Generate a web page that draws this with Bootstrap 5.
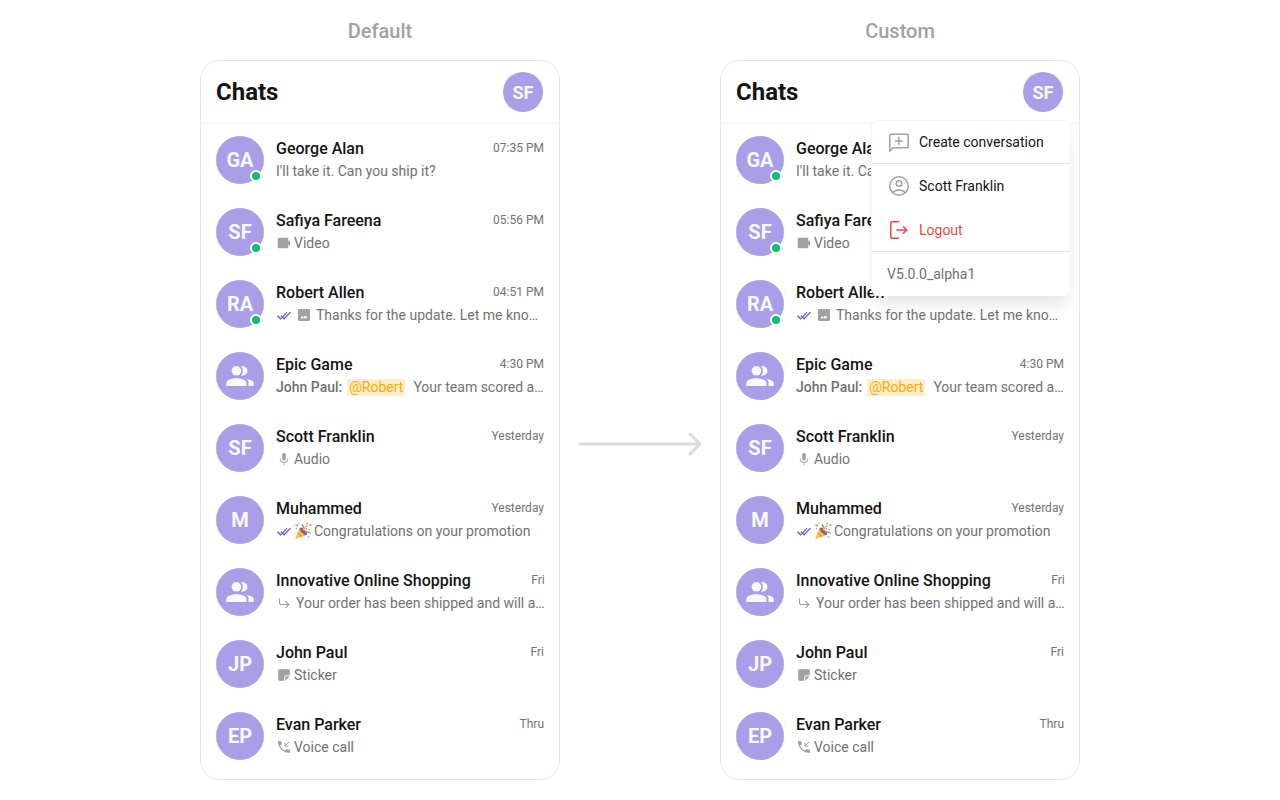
<!DOCTYPE html>
<html lang="en">
<head>
<meta charset="utf-8">
<meta name="viewport" content="width=device-width, initial-scale=1">
<title>Chats</title>
<link href="https://cdn.jsdelivr.net/npm/bootstrap@5.3.0/dist/css/bootstrap.min.css" rel="stylesheet">
<style>
  body { font-family: Roboto, sans-serif; color: #141414; background: #fff; }
  main { padding-top: 19px; }
  .panel { flex: 0 1 360px; min-width: 0; }
  .panel-label { font-size: 20px; line-height: 24px; font-weight: 500; color: #a1a1a1; margin-bottom: 17px; }
  .chat-card { border: 1px solid #e8e8e8; border-radius: 20px; padding-bottom: 7px; }
  .chat-head { height: 63px; padding: 0 16px 0 15px; border-bottom: 1px solid #f5f5f5; }
  .chat-title { font-size: 24px; line-height: 28px; font-weight: 700; }
  .avatar { width: 48px; height: 48px; background: #aa9ee8; color: #f9f8fd; font-size: 20px; font-weight: 700; }
  .avatar-btn { width: 40px; height: 40px; font-size: 18px; }
  .online { width: 12px; height: 12px; right: 2px; bottom: 2px; background: #09c26f; border: 2px solid #fff; }
  .chat-row { gap: 12px; padding: 12px 15px; }
  .chat-name { font-size: 16px; line-height: 26px; font-weight: 500; }
  .chat-time { font-size: 12px; line-height: 24px; color: #727272; }
  .chat-sub { font-size: 14px; line-height: 18px; color: #727272; gap: 2px; }
  .chat-sub.roomy { gap: 4px; }
  .chat-sub svg { width: 16px; height: 16px; flex: none; fill: #a1a1a1; }
  .chat-sub svg.emoji { width: 18px; height: 18px; }
  .sender { font-weight: 500; margin-right: 3px; }
  .mention { color: #ffab00; background: #ffeecc; border-radius: 2px; line-height: 17px; padding: 0 2px; margin-right: 6px; }
  .arrow-col { flex: 0 0 160px; padding-top: 88px; }
  .user-menu { top: 59px; right: 8px; width: 200px; border: 1px solid #f5f5f5; border-bottom: 0; border-radius: 8px; box-shadow: 0 12px 16px -4px rgba(20,20,20,.11); font-size: 14px; background: #fff; z-index: 5; }
  .user-menu li { height: 44px; }
  .user-menu li:first-child { height: 43px; }
  .user-menu li.ruled { box-shadow: inset 0 -1px #e4e4e4; }
  .user-menu button, .version { padding: 0 15px; color: #141414; gap: 8px; font-size: 14px; }
  .user-menu svg { width: 24px; height: 24px; flex: none; }
  .user-menu .logout { color: #f44649; }
  .user-menu .version { color: #727272; }
</style>
</head>
<body>
<svg class="d-none" aria-hidden="true">
  <symbol id="i-video" viewBox="0 0 16 16"><path d="M3 2.700h8a1.300 1.300 0 0 1 1.300 1.300v2.700L14 5v6l-1.700-1.700V12A1.300 1.300 0 0 1 11 13.300H3A1.300 1.300 0 0 1 1.700 12V4A1.300 1.300 0 0 1 3 2.700z"/></symbol>
  <symbol id="i-image" viewBox="0 0 16 16"><path fill-rule="evenodd" d="M3.200 2h9.600A1.200 1.200 0 0 1 14 3.200v9.600a1.200 1.200 0 0 1-1.200 1.200H3.200A1.200 1.200 0 0 1 2 12.800V3.200A1.200 1.200 0 0 1 3.200 2zM4.500 11.300h7L9.300 8.400l-1.800 2.200-1.300-1.500z"/></symbol>
  <symbol id="i-read" viewBox="0 0 16 16"><path d="M1.400 8.700l3.200 3.100 .8-.8M6.500 9.900l4.500-4.500M4.900 8.700L8 11.800l6.600-6.700" fill="none" stroke="#6852d6" stroke-width="1.250"/></symbol>
  <symbol id="i-mic" viewBox="0 0 16 16"><rect x="6.200" y="2" width="3.600" height="7.600" rx="1.800"/><path d="M4 7.600a4 4 0 0 0 8 0M8 11.500V14" fill="none" stroke="#a1a1a1"/></symbol>
  <symbol id="i-reply" viewBox="0 0 16 16"><path d="M3.500 3.500v4.300a1.700 1.700 0 0 0 1.700 1.700h7.500M9.500 6.200l3.300 3.300-3.300 3.300" fill="none" stroke="#a1a1a1" stroke-width="1.100"/></symbol>
  <symbol id="i-sticker" viewBox="0 0 16 16"><path d="M3.500 2.300h9A1.300 1.300 0 0 1 13.800 3.600V8.300H10A1.700 1.700 0 0 0 8.300 10v3.700H3.500a1.300 1.300 0 0 1-1.300-1.300V3.600a1.300 1.300 0 0 1 1.300-1.300zM9.200 13.500V10a.8.8 0 0 1 .8-.8h3.600z"/></symbol>
  <symbol id="i-call" viewBox="0 0 16 16"><path d="M2.600 2h2.400l.9 3-1.700 1.700c.9 2 2.600 3.700 4.900 4.900l1.700-1.700 3.100.8v2.500c0 .5-.3.800-.8.800C7 13.700 2 8.500 1.900 2.800c0-.5.300-.8.700-.8z"/><path d="M13.500 2.500L9 7M9 3.500V7h3.500" fill="none" stroke="#a1a1a1"/></symbol>
  <symbol id="i-party" viewBox="0 0 18 18">
    <path d="M1 17.300L5.800 5.700 13 12.700z" fill="#f5c043"/><path d="M3.700 10.800l4.300 4.100M5.100 7.300l5.700 6.300" stroke="#e39a35" stroke-width="1"/>
    <ellipse cx="9.400" cy="9.300" rx="1.700" ry="4.800" transform="rotate(-45 9.400 9.300)" fill="#8c5a96"/>
    <path d="M8 7.800C10 6 9.400 3.800 7.900 2.500" fill="none" stroke="#f05a4d" stroke-width="1.300"/>
    <path d="M10 9c0-3 1.500-5 4-5.200" fill="none" stroke="#f5b82e" stroke-width="1.300"/>
    <path d="M11 10.300c2-.8 4-.4 5.700 1" fill="none" stroke="#43a5ec" stroke-width="1.300"/>
    <path d="M1.500 3l2.400.6M13.500 1l-.8 1.500" stroke="#479eed" stroke-width="1.400"/>
    <circle cx="4.500" cy="1.500" r=".8" fill="#f7bd32"/><circle cx="16.500" cy="3" r=".9" fill="#ef5c7a"/><circle cx="12.300" cy="6.800" r=".8" fill="#ef5c7a"/><circle cx="15.500" cy="7.500" r=".8" fill="#f7bd32"/><circle cx="14.500" cy="15" r=".8" fill="#d477d1"/><circle cx="2.500" cy="6.300" r=".7" fill="#ef5c7a"/>
  </symbol>
  <symbol id="i-group" viewBox="0 0 48 48"><circle cx="20.400" cy="18.800" r="4.800"/><path d="M25.200 14.200c.9-.2 1.700-.2 2.600 0a4.800 4.800 0 0 1 0 9.300c-.9.200-1.700.2-2.600 0 2.200-2.700 2.200-6.600 0-9.300zM10.300 33.200v-1.700c0-1.500.7-2.800 2-3.500 5-2.500 11.200-2.500 16.200 0 1.300.7 2 2 2 3.500v1.700a.7.7 0 0 1-.7.7H11a.7.7 0 0 1-.7-.7zM32.500 33.900v-2.700c0-1.700-.8-3.200-2.200-4.200 2 .2 3.900.7 5.600 1.500 1.200.6 1.900 1.600 1.900 3v1.700a.7.7 0 0 1-.7.7z"/></symbol>
</svg>

<main class="d-flex justify-content-center pb-3">
  <section class="panel">
    <h2 class="panel-label text-center">Default</h2>
    <div class="chat-card position-relative" data-chats></div>
  </section>
  <div class="arrow-col d-flex align-items-center justify-content-center">
    <svg width="124" height="24" viewBox="0 0 124 24" fill="none" stroke="#dcdcdc" stroke-width="3" stroke-linecap="round" stroke-linejoin="round" aria-hidden="true"><path d="M2 12h120M112 2l10 10-10 10"/></svg>
  </div>
  <section class="panel">
    <h2 class="panel-label text-center">Custom</h2>
    <div class="chat-card position-relative" data-chats>
      <ul class="user-menu position-absolute list-unstyled mb-0">
        <li class="ruled"><button class="btn border-0 w-100 h-100 d-flex align-items-center text-nowrap"><svg viewBox="0 0 24 24" fill="none" stroke="#a1a1a1" stroke-width="1.500" aria-hidden="true"><path d="M2.750 20V4.500c0-.8.500-1.250 1.250-1.250h16c.8 0 1.250.5 1.250 1.250v11c0 .8-.5 1.250-1.250 1.250H6zM12 6v8M8 10h8"/></svg>Create conversation</button></li>
        <li><button class="btn border-0 w-100 h-100 d-flex align-items-center"><svg viewBox="0 0 24 24" fill="none" stroke="#a1a1a1" stroke-width="1.500" aria-hidden="true"><circle cx="12" cy="12" r="9.250"/><circle cx="12" cy="9.500" r="2.800"/><path d="M5.600 18.500c4-3.300 8.800-3.300 12.800 0"/></svg>Scott Franklin</button></li>
        <li class="ruled"><button class="btn border-0 w-100 h-100 d-flex align-items-center logout"><svg viewBox="0 0 24 24" fill="none" stroke="#f44649" stroke-width="1.500" aria-hidden="true"><path d="M12 3.750H5c-.8 0-1.250.5-1.250 1.250v14c0 .8.500 1.250 1.250 1.250h7M9.500 12h10M16 8.200l3.800 3.800-3.800 3.800"/></svg>Logout</button></li>
        <li class="version d-flex align-items-center">V5.0.0_alpha1</li>
      </ul>
    </div>
  </section>
</main>

<template id="chats">
  <header class="chat-head d-flex align-items-center justify-content-between">
    <h1 class="chat-title mb-0">Chats</h1>
    <button class="avatar avatar-btn btn border-0 rounded-circle p-0">SF</button>
  </header>
  <ul class="list-unstyled mb-0" data-rows></ul>
</template>

<script src="https://cdn.jsdelivr.net/npm/bootstrap@5.3.0/dist/js/bootstrap.bundle.min.js"></script>
<script>
  const icon = (n, c = '') => `<svg class="${c}" aria-hidden="true"><use href="#i-${n}"/></svg>`;
  const chats = [
    { who: 'GA', online: true, name: 'George Alan', time: '07:35 PM', sub: `<span>I'll take it. Can you ship it?</span>` },
    { who: 'SF', online: true, name: 'Safiya Fareena', time: '05:56 PM', sub: icon('video') + '<span>Video</span>' },
    { who: 'RA', online: true, name: 'Robert Allen', time: '04:51 PM', roomy: true, sub: icon('read') + icon('image') + '<span>Thanks for the update. Let me kno…</span>' },
    { group: true, name: 'Epic Game', time: '4:30 PM', sub: '<span class="sender">John Paul:</span><span class="mention">@Robert</span><span>Your team scored a…</span>' },
    { who: 'SF', name: 'Scott Franklin', time: 'Yesterday', sub: icon('mic') + '<span>Audio</span>' },
    { who: 'M', name: 'Muhammed', time: 'Yesterday', sub: icon('read') + icon('party', 'emoji') + '<span>Congratulations on your promotion</span>' },
    { group: true, name: 'Innovative Online Shopping', time: 'Fri', roomy: true, sub: icon('reply') + '<span>Your order has been shipped and will a…</span>' },
    { who: 'JP', name: 'John Paul', time: 'Fri', sub: icon('sticker') + '<span>Sticker</span>' },
    { who: 'EP', name: 'Evan Parker', time: 'Thru', sub: icon('call') + '<span>Voice call</span>' }
  ];
  const row = c => `<li class="chat-row d-flex">
    <div class="avatar rounded-circle position-relative d-flex align-items-center justify-content-center flex-shrink-0">${c.group ? '<svg width="48" height="48" fill="currentColor" aria-hidden="true"><use href="#i-group"/></svg>' : c.who}${c.online ? '<span class="online position-absolute rounded-circle"></span>' : ''}</div>
    <div class="flex-grow-1">
      <div class="d-flex justify-content-between"><span class="chat-name">${c.name}</span><span class="chat-time">${c.time}</span></div>
      <div class="chat-sub d-flex align-items-center text-nowrap ${c.roomy ? 'roomy' : ''}">${c.sub}</div>
    </div></li>`;
  document.querySelectorAll('[data-chats]').forEach(card => {
    card.prepend(document.getElementById('chats').content.cloneNode(true));
    card.querySelector('[data-rows]').innerHTML = chats.map(row).join('');
  });
</script>
</body>
</html>
